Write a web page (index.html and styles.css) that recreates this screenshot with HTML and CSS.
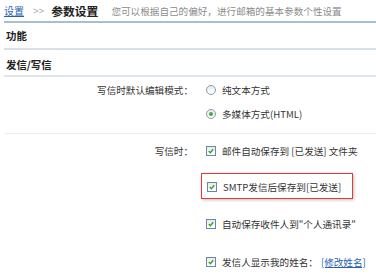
FILE: index.html
```html
<html>
    <head>
        <meta charset="UTF-8">
        <title>参数设置</title>
        <link rel="stylesheet" href="styles.css">
    </head>
    <body>
        <div class="crumb">
            <a class="crumb-link" href="#">设置</a>
            <span class="crumb-sep">&gt;&gt;</span>
            <span class="crumb-title">参数设置</span>
            <span class="crumb-desc">您可以根据自己的偏好，进行邮箱的基本参数个性设置</span>
        </div>
        <div class="section-head">功能</div>
        <div class="section-head sub">发信/写信</div>

        <div class="form-row first">
            <div class="form-label">写信时默认编辑模式：</div>
            <div class="form-options radios">
                <div class="opt"><span class="radio"></span>纯文本方式</div>
                <div class="opt"><span class="radio on"></span>多媒体方式(HTML)</div>
            </div>
        </div>

        <div class="form-row">
            <div class="form-label">写信时：</div>
            <div class="form-options checks">
                <div class="opt"><span class="check"><svg viewBox="0 0 9 9"><path d="M2 4.6 L3.8 6.4 L7 2.6" /></svg></span>邮件自动保存到 [已发送] 文件夹</div>
                <div class="opt marked"><span class="check"><svg viewBox="0 0 9 9"><path d="M2 4.6 L3.8 6.4 L7 2.6" /></svg></span>SMTP发信后保存到[已发送]</div>
                <div class="opt"><span class="check"><svg viewBox="0 0 9 9"><path d="M2 4.6 L3.8 6.4 L7 2.6" /></svg></span>自动保存收件人到"个人通讯录"</div>
                <div class="opt"><span class="check"><svg viewBox="0 0 9 9"><path d="M2 4.6 L3.8 6.4 L7 2.6" /></svg></span>发信人显示我的姓名：<a class="rename" href="#">[修改姓名]</a></div>
            </div>
        </div>
    </body>
</html>
```

FILE: styles.css
```css
body{
    margin: 0;
    padding: 0;
    font-family: "Noto Sans CJK SC", "Liberation Sans", sans-serif;
    font-size: 9.6px;
    color: #333;
    background-color: #fff;
}
a{
    color: #2b5fb0;
}
.crumb{
    display: flex;
    align-items: center;
    height: 21px;
    margin-left: 4px;
    border-bottom: 2px solid #a9bdd3;
    white-space: nowrap;
}
.crumb-link{
    font-size: 10px;
}
.crumb-sep{
    color: #a8a8a8;
    margin: 0 7px 0 9px;
    font-family: "Liberation Sans", sans-serif;
}
.crumb-title{
    font-size: 11.8px;
    font-weight: bold;
    color: #222;
    margin-right: 13px;
}
.crumb-desc{
    color: #8c8c8c;
}
.section-head{
    height: 25px;
    line-height: 25px;
    margin-left: 4px;
    padding-left: 2px;
    font-size: 10.4px;
    font-weight: bold;
    color: #222;
    border-bottom: 2px solid #d7e0e9;
}
.section-head.sub{
    line-height: 30px;
    border-bottom-color: #dfe5ec;
}
.form-row{
    display: flex;
    margin-left: 5px;
    border-bottom: 1px solid #ececec;
}
.form-row.first{
    padding: 1px 0 7px 0;
}
.form-row + .form-row{
    border-bottom: none;
    padding-top: 5px;
}
.form-label{
    width: 188px;
    text-align: right;
    height: 24px;
    line-height: 24px;
}
.form-options{
    margin-left: 13px;
}
.opt{
    display: flex;
    align-items: center;
    height: 24px;
    white-space: nowrap;
}
.checks .opt{
    height: 38px;
    align-items: flex-start;
    line-height: 14px;
    padding-top: 5px;
    box-sizing: border-box;
}
.checks .opt:first-child{
    height: 34px;
}
.checks .opt .check{
    margin-top: 2px;
}
.checks .opt.marked{
    height: 26px;
    width: 152px;
    margin: 0 0 13px -5px;
    padding: 6px 0 0 5px;
    border: 1px solid #e23a3a;
    box-shadow: 1px 1px 3px rgba(0, 0, 0, 0.25);
}
.radio{
    width: 8px;
    height: 8px;
    border: 1px solid #8a9aae;
    border-radius: 50%;
    margin-right: 6px;
    background: linear-gradient(#e8ecf0, #fff);
    display: flex;
    align-items: center;
    justify-content: center;
}
.radio.on::after{
    content: "";
    width: 4px;
    height: 4px;
    border-radius: 50%;
    background-color: #3fae3f;
}
.check{
    width: 8px;
    height: 8px;
    border: 1px solid #6e85a3;
    margin-right: 6px;
    background: linear-gradient(#e6ebf1, #fff);
    flex-shrink: 0;
}
.check svg{
    display: block;
    width: 8px;
    height: 8px;
}
.check path{
    fill: none;
    stroke: #2ea52e;
    stroke-width: 1.6;
}
.rename{
    margin-left: 3px;
}
```
